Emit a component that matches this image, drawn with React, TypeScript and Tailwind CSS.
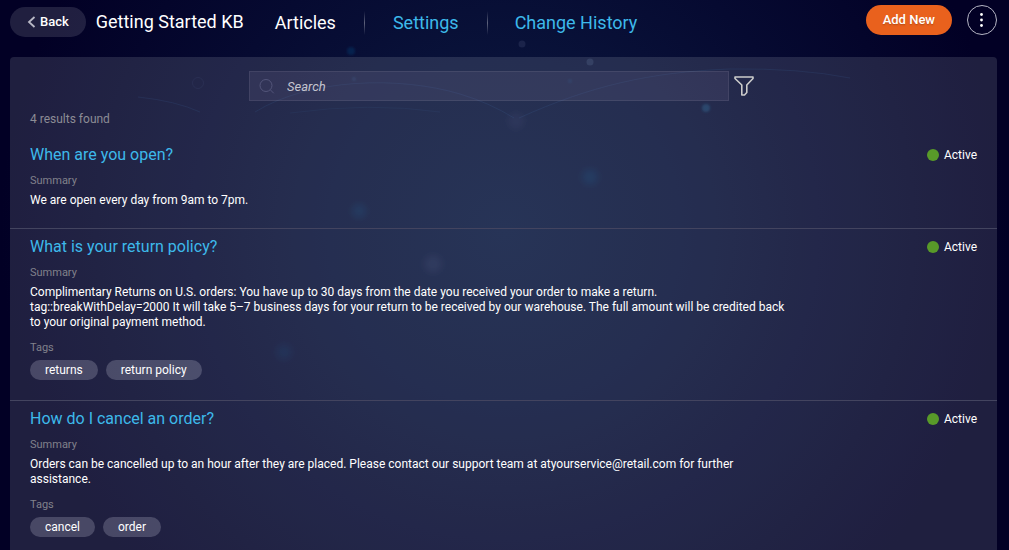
import React from 'react';

type Article = { title: string; summary: string; tags: string[] };

const articles: Article[] = [
  {
    title: 'When are you open?',
    summary: 'We are open every day from 9am to 7pm.',
    tags: [],
  },
  {
    title: 'What is your return policy?',
    summary:
      'Complimentary Returns on U.S. orders: You have up to 30 days from the date you received your order to make a return. tag::breakWithDelay=2000 It will take 5–7 business days for your return to be received by our warehouse. The full amount will be credited back to your original payment method.',
    tags: ['returns', 'return policy'],
  },
  {
    title: 'How do I cancel an order?',
    summary:
      'Orders can be cancelled up to an hour after they are placed. Please contact our support team at atyourservice@retail.com for further assistance.',
    tags: ['cancel', 'order'],
  },
];

function Backdrop() {
  return (
    <svg
      className="absolute inset-0 h-full w-full"
      viewBox="0 0 1009 550"
      preserveAspectRatio="xMidYMin slice"
      fill="none"
      aria-hidden="true"
    >
      <defs>
        <filter id="soft" x="-20%" y="-20%" width="140%" height="140%">
          <feGaussianBlur stdDeviation="1.2" />
        </filter>
        <filter id="softer" x="-20%" y="-20%" width="140%" height="140%">
          <feGaussianBlur stdDeviation="3" />
        </filter>
      </defs>
      <g stroke="#2f6fb0" strokeOpacity="0.13">
        <path d="M255 112C310 78 400 76 460 94Q490 103 514 118" />
        <path d="M519 118C590 86 650 72 730 69Q800 68 850 78" />
        <path d="M290 113Q370 102 440 112" strokeOpacity="0.08" />
        <path d="M138 97Q176 101 200 112" />
      </g>
      <circle cx="198" cy="83" r="5.5" stroke="#4b5a90" strokeOpacity="0.12" />
      <g filter="url(#soft)">
        <circle cx="351" cy="51" r="4" fill="#1765a0" fillOpacity="0.22" />
        <circle cx="354" cy="79" r="2" fill="#1d70a8" fillOpacity="0.2" />
        <circle cx="570" cy="81" r="2" fill="#1d70a8" fillOpacity="0.15" />
        <circle cx="706" cy="108" r="4" fill="#1f78a8" fillOpacity="0.3" />
      </g>
      <g filter="url(#softer)">
        <circle cx="590" cy="177" r="8" fill="#1765a8" fillOpacity="0.14" />
        <circle cx="359" cy="211" r="7" fill="#1765a8" fillOpacity="0.14" />
        <circle cx="433" cy="264" r="9" fill="#6f78a8" fillOpacity="0.1" />
        <circle cx="516" cy="121" r="8" fill="#6f78a8" fillOpacity="0.08" />
        <circle cx="284" cy="352" r="8" fill="#1765a8" fillOpacity="0.1" />
      </g>
      <circle cx="522" cy="44" r="3.5" fill="#59628f" fillOpacity="0.22" />
      <circle cx="590" cy="62" r="3.5" fill="#59729f" fillOpacity="0.22" />
    </svg>
  );
}

function Divider() {
  return <span className="h-6 w-px bg-linear-to-b from-white/0 via-white/35 to-white/0" />;
}

function ArticleRow({ title, summary, tags }: Article) {
  return (
    <li className="border-b border-[#43445f] px-5 pt-2 pb-5">
      <div className="flex items-center justify-between">
        <h2 className="text-base leading-5">
          <a href="#article" className="text-[#3db9ea]">{title}</a>
        </h2>
        <div className="flex items-center gap-[5px] text-xs leading-5">
          <span className="size-3 rounded-full bg-[#589a29]" />
          Active
        </div>
      </div>
      <p className="mt-2 text-[11px] leading-4 text-[#81818b]">Summary</p>
      <p className="mt-1 max-w-[760px] text-xs leading-[15px]">{summary}</p>
      {tags.length > 0 && (
        <>
          <p className="mt-2.5 text-[11px] leading-4 text-[#81818b]">Tags</p>
          <ul className="mt-1 flex gap-2">
            {tags.map((tag) => (
              <li key={tag} className="rounded-full bg-[#f0f0ff]/20 px-[15px] text-xs leading-5">
                {tag}
              </li>
            ))}
          </ul>
        </>
      )}
    </li>
  );
}

export default function App() {
  return (
    <div className="relative flex h-screen flex-col overflow-hidden bg-[#020025] bg-[radial-gradient(ellipse_50%_90%_at_50%_42%,#0b1840_0%,#091239_35%,#060a31_62%,#020025_100%)] font-['Roboto',sans-serif] text-white">
      <Backdrop />
      <header className="relative flex h-[57px] shrink-0 items-start pr-3 pl-2.5">
        <button
          type="button"
          className="mt-[7px] flex h-[30px] items-center gap-1 rounded-full bg-white/12 px-[17px] text-[13px] font-medium"
        >
          <svg className="h-3 w-[9px]" viewBox="0 0 9 12" fill="none" stroke="#b9b9c6" strokeWidth="1.8" aria-hidden="true">
            <path d="M7.5 1L2 6l5.5 5" />
          </svg>
          Back
        </button>
        <h1 className="mt-2.5 ml-2.5 text-lg leading-6">Getting Started KB</h1>
        <nav className="mt-[11px] ml-[31px] flex items-center text-lg leading-6">
          <a href="#articles" className="pr-7">Articles</a>
          <Divider />
          <a href="#settings" className="px-7 text-[#3db9ea]">Settings</a>
          <Divider />
          <a href="#history" className="px-[27px] text-[#3db9ea]">Change History</a>
        </nav>
        <div className="mt-[5px] ml-auto flex items-center gap-[15px]">
          <button
            type="button"
            className="h-[30px] rounded-full bg-[#e9611d] px-[17px] text-[13px] font-medium text-shadow-sm"
          >
            Add New
          </button>
          <button
            type="button"
            aria-label="More options"
            className="flex size-[30px] items-center justify-center rounded-full border border-[#b5b5c4]"
          >
            <svg className="size-4" viewBox="0 0 16 16" fill="white" aria-hidden="true">
              <circle cx="7.5" cy="2.5" r="1.4" />
              <circle cx="7.5" cy="8" r="1.4" />
              <circle cx="7.5" cy="13.5" r="1.4" />
            </svg>
          </button>
        </div>
      </header>

      <main className="relative mr-3 ml-2.5 min-h-0 flex-1 overflow-hidden rounded-t bg-[#faffff]/12">
        <form className="mt-3.5 flex items-center justify-center gap-[5px] pr-1" role="search">
          <label className="flex h-[30px] w-[480px] items-center border border-white/8 bg-[#8878a0]/15">
            <svg className="ml-[9px] size-4 shrink-0" viewBox="0 0 16 16" fill="none" stroke="#53557a" aria-hidden="true">
              <circle cx="7" cy="7.500" r="6" />
              <path d="M11.300 11.800l3.500 3.500" />
            </svg>
            <input
              type="text"
              aria-label="Search"
              placeholder="Search"
              className="ml-3 h-full min-w-0 flex-1 bg-transparent text-[13px] italic outline-none placeholder:text-[#c4c4cf]"
            />
          </label>
          <button type="button" aria-label="Filter">
            <svg className="size-5" viewBox="0 0 20 20" fill="none" stroke="#cbcbcb" strokeWidth="1.6" strokeLinejoin="round" aria-hidden="true">
              <path d="M1 1h18v1.5L12.8 9v7.5L10.5 19H7.8V9L1 2.500z" />
            </svg>
          </button>
        </form>
        <p className="mt-2.5 px-5 text-xs leading-4 text-[#8c8c95]">4 results found</p>
        <ul className="mt-2.5">
          {articles.map((article) => (
            <ArticleRow key={article.title} {...article} />
          ))}
        </ul>
      </main>
    </div>
  );
}
